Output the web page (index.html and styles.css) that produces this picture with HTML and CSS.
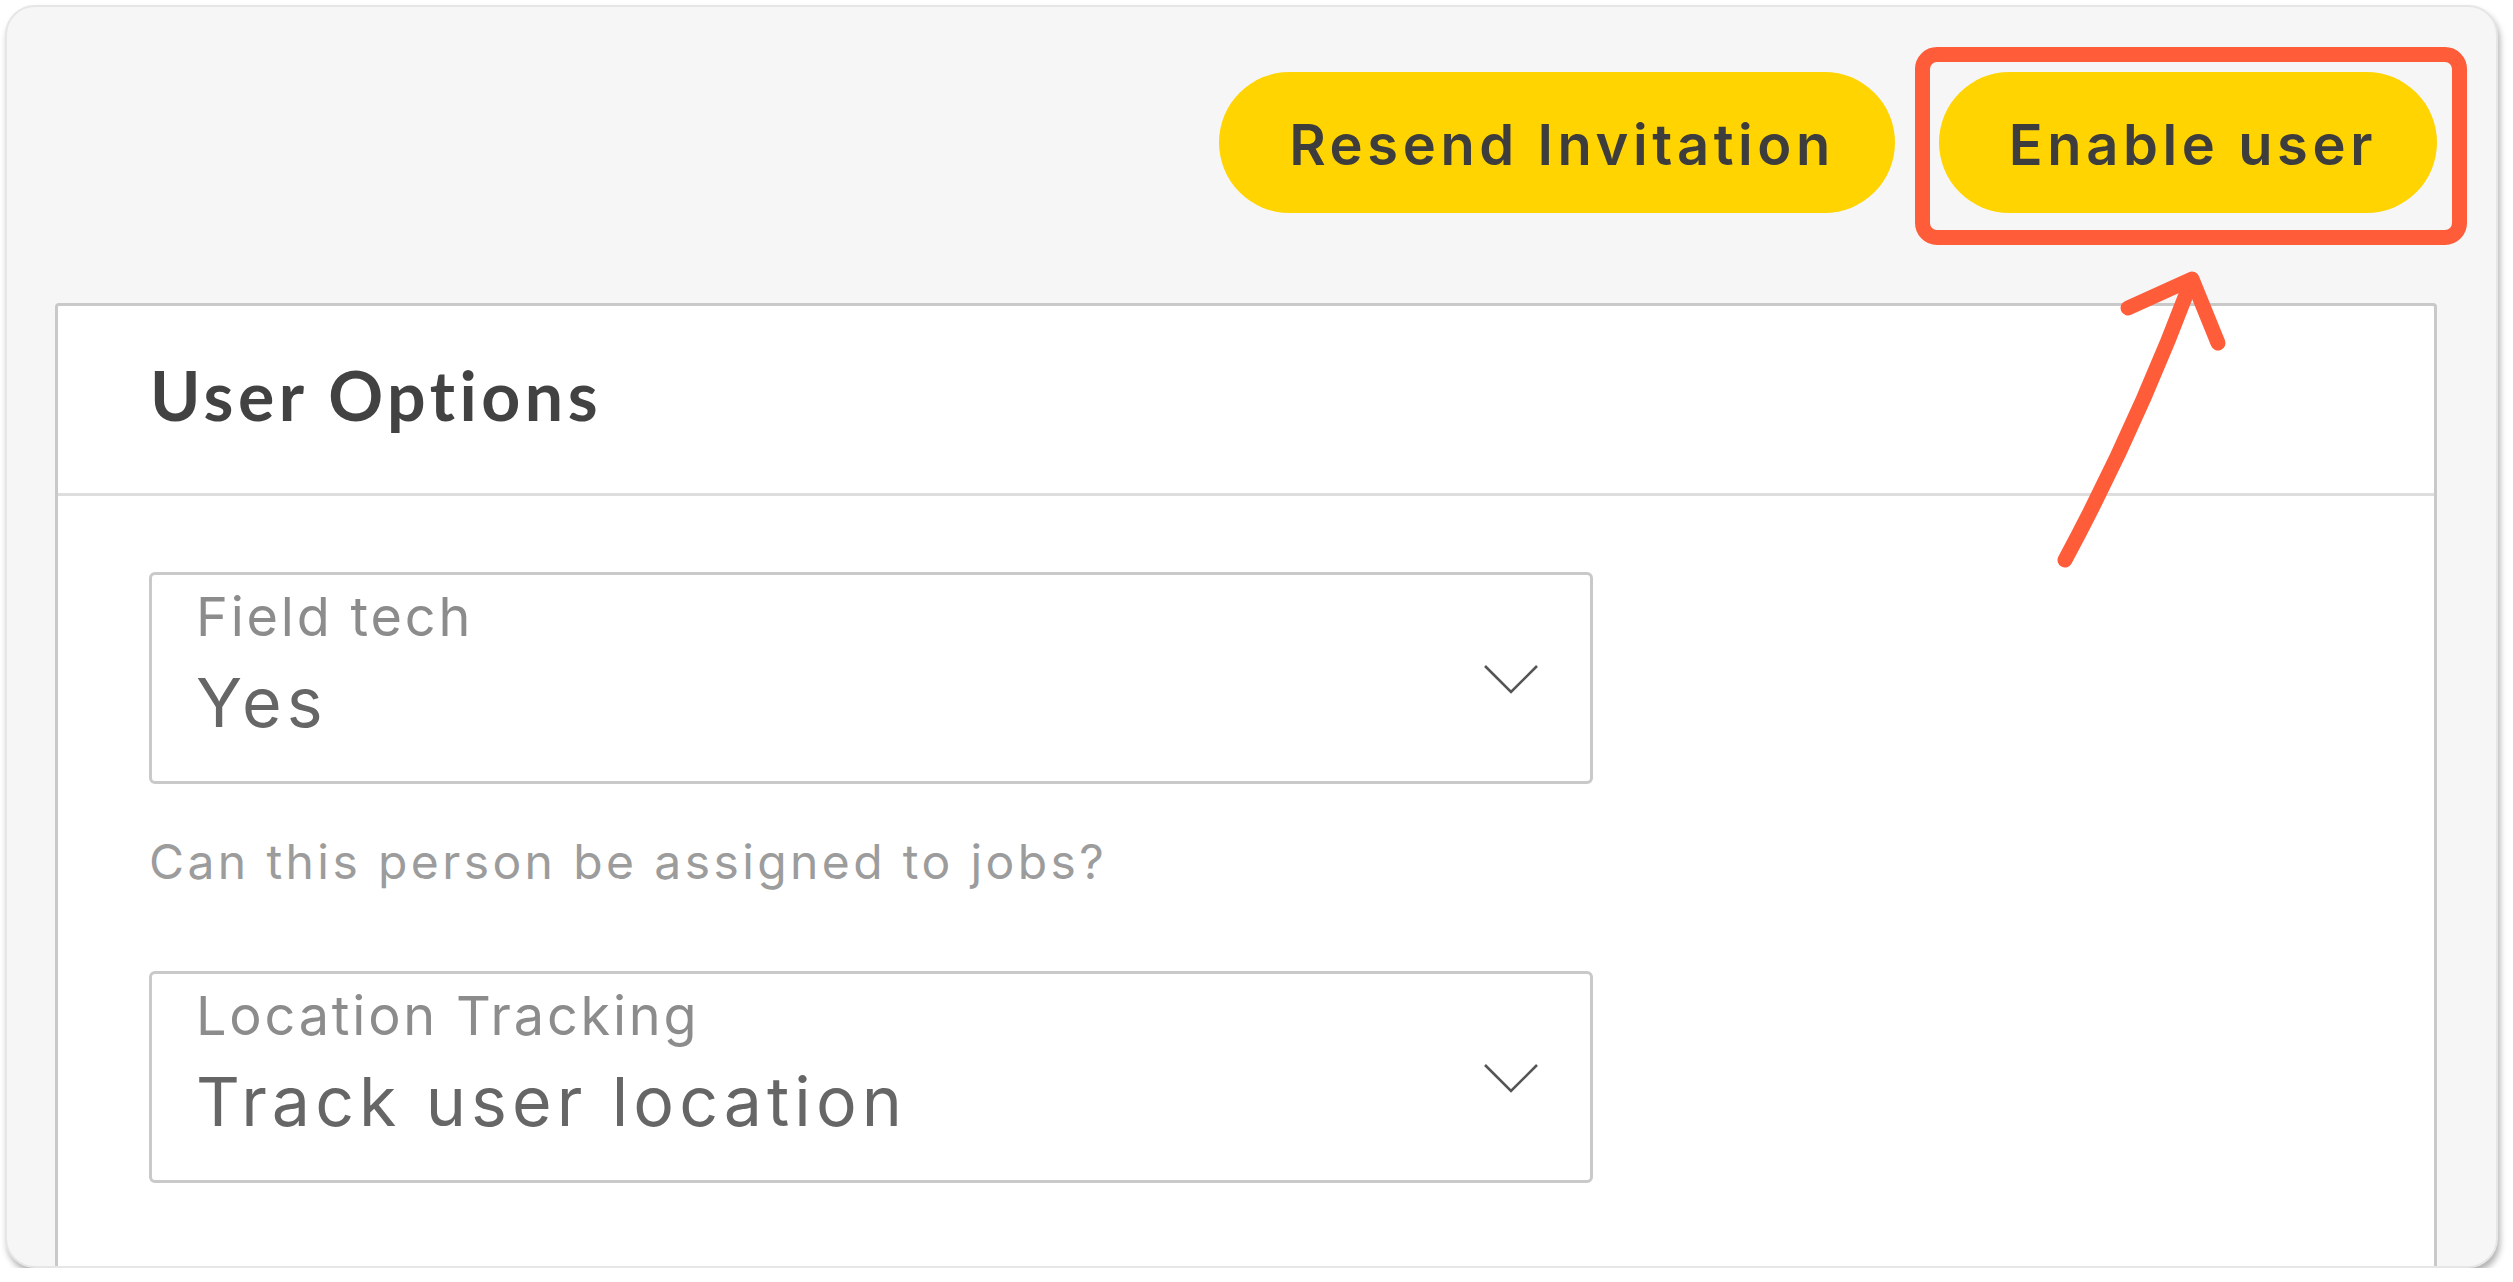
FILE: index.html
```html
<!DOCTYPE html>
<html lang="en">
<head>
<meta charset="utf-8">
<title>User Options</title>
<link rel="stylesheet" href="styles.css">
</head>
<body>
<div class="card">
  <div class="actions">
    <button class="btn">Resend Invitation</button>
    <span class="highlight">
      <button class="btn btn-enable">Enable user</button>
    </span>
  </div>
  <svg class="arrow" width="200" height="320" viewBox="0 0 200 320">
    <path d="M25 300 Q 96 168 151 22" fill="none" stroke="#ff5c3a" stroke-width="15" stroke-linecap="round"/>
    <path d="M88 48 L152 19 L178 83" fill="none" stroke="#ff5c3a" stroke-width="15" stroke-linecap="round" stroke-linejoin="round"/>
  </svg>
  <section class="panel">
    <header class="panel-head">
      <h2 class="panel-title">User Options</h2>
    </header>
    <div class="panel-body">
      <div class="field">
        <div class="field-text">
          <div class="field-label">Field tech</div>
          <div class="field-value">Yes</div>
        </div>
        <svg class="chevron" width="58" height="32" viewBox="0 0 58 32">
          <path d="M3 4 L29 30 L55 4" fill="none" stroke="#555" stroke-width="2.6"/>
        </svg>
      </div>
      <p class="helper">Can this person be assigned to jobs?</p>
      <div class="field">
        <div class="field-text">
          <div class="field-label">Location Tracking</div>
          <div class="field-value">Track user location</div>
        </div>
        <svg class="chevron" width="58" height="32" viewBox="0 0 58 32">
          <path d="M3 4 L29 30 L55 4" fill="none" stroke="#555" stroke-width="2.6"/>
        </svg>
      </div>
    </div>
  </section>
</div>
</body>
</html>
```

FILE: styles.css
```css
html, body {
  margin: 0;
  padding: 0;
  background: #ffffff;
}

body {
  font-family: "Inter", "Noto Sans", sans-serif;
}

.card {
  position: relative;
  margin: 5px 0 0 5px;
  width: 2489px;
  height: 1259px;
  background: #f6f6f6;
  border: 2px solid #e6e6e6;
  border-radius: 30px;
  box-shadow: 2px 5px 6px rgba(0, 0, 0, 0.3);
  overflow: hidden;
  display: flex;
  flex-direction: column;
}

.actions {
  display: flex;
  justify-content: flex-end;
  align-items: center;
  gap: 44px;
  padding: 65px 59px 0 0;
}

.btn {
  height: 141px;
  padding: 4px 60px 0 70px;
  border: none;
  border-radius: 71px;
  background: #ffd400;
  color: #3d3d3d;
  font-family: "Inter", "Noto Sans", sans-serif;
  font-weight: 600;
  font-size: 56px;
  line-height: 1;
  letter-spacing: 4.6px;
  white-space: nowrap;
}

.highlight {
  position: relative;
  display: inline-flex;
}

.highlight::after {
  content: "";
  position: absolute;
  top: -25px;
  bottom: -32px;
  left: -24px;
  right: -30px;
  border: 15px solid #ff5c3a;
  border-radius: 22px;
  pointer-events: none;
}

.arrow {
  position: absolute;
  left: 2033px;
  top: 253px;
  z-index: 2;
}

.panel {
  margin: 90px 59px 0 48px;
  flex: 1 0 auto;
  height: 1100px;
  background: #ffffff;
  border: 3px solid #c9c9c9;
  border-radius: 4px 4px 0 0;
}

.panel-head {
  height: 177px;
  padding: 0 0 10px 92px;
  display: flex;
  align-items: center;
  border-bottom: 3px solid #dedede;
}

.panel-title {
  margin: 0;
  font-family: "Lato", "Noto Sans", sans-serif;
  font-weight: 700;
  font-size: 68px;
  line-height: 1;
  letter-spacing: 4.5px;
  color: #424242;
}

.panel-body {
  padding: 76px 0 0 91px;
}

.field {
  width: 1438px;
  height: 206px;
  border: 3px solid #c9c9c9;
  border-radius: 6px;
  display: flex;
  align-items: center;
  justify-content: space-between;
}

.field-text {
  align-self: flex-start;
  padding: 15px 0 0 44px;
  display: flex;
  flex-direction: column;
}

.field-label {
  font-size: 54px;
  line-height: 1;
  letter-spacing: 2.8px;
  color: #8c8c8c;
}

.field-value {
  margin-top: 24px;
  font-size: 68px;
  line-height: 1;
  letter-spacing: 5.1px;
  color: #666666;
}

.chevron {
  margin-right: 50px;
  flex: none;
}

.helper {
  margin: 54px 0 85px;
  font-size: 48px;
  line-height: 1;
  letter-spacing: 3.4px;
  color: #9c9c9c;
}
```
